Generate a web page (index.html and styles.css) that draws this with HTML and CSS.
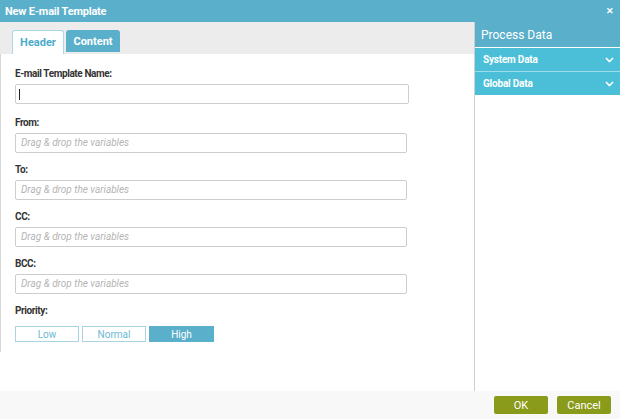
FILE: index.html
```html
<!DOCTYPE html>
<html lang="en">
<head>
  <meta charset="UTF-8">
  <meta name="viewport" content="width=device-width, initial-scale=1.0">
  <title>New E-mail Template</title>
  <link rel="stylesheet" href="styles.css">
</head>
<body>
  <div class="dialog">
    <div class="titlebar">
      <span class="title">New E-mail Template</span>
      <span class="close">&#x2715;</span>
    </div>
    <div class="main">
      <div class="left">
        <div class="tabs">
          <div class="tab active">Header</div>
          <div class="tab">Content</div>
        </div>
        <div class="form">
          <div class="field first">
            <label>E-mail Template Name:</label>
            <div class="input wide"><span class="caret"></span></div>
          </div>
          <div class="field">
            <label>From:</label>
            <div class="input">Drag &amp; drop the variables</div>
          </div>
          <div class="field">
            <label>To:</label>
            <div class="input">Drag &amp; drop the variables</div>
          </div>
          <div class="field">
            <label>CC:</label>
            <div class="input">Drag &amp; drop the variables</div>
          </div>
          <div class="field">
            <label>BCC:</label>
            <div class="input">Drag &amp; drop the variables</div>
          </div>
          <div class="field priority">
            <label>Priority:</label>
            <div class="seg">
              <button>Low</button>
              <button>Normal</button>
              <button class="on">High</button>
            </div>
          </div>
        </div>
      </div>
      <div class="side">
        <div class="side-head">Process Data</div>
        <div class="acc">System Data
          <svg width="9" height="6" viewBox="0 0 9 6"><path d="M1 1l3.5 3.5L8 1" fill="none" stroke="#fff" stroke-width="1.6"/></svg>
        </div>
        <div class="acc">Global Data
          <svg width="9" height="6" viewBox="0 0 9 6"><path d="M1 1l3.5 3.5L8 1" fill="none" stroke="#fff" stroke-width="1.6"/></svg>
        </div>
      </div>
    </div>
    <div class="footer">
      <button class="btn">OK</button>
      <button class="btn">Cancel</button>
    </div>
  </div>
</body>
</html>
```

FILE: styles.css
```css
:root {
  --title: #5aafca;
  --row: #4bbfd7;
  --olive: #8a9a1b;
  --border: #cfcfcf;
}
* { box-sizing: border-box; }
body {
  margin: 0;
  font-family: Roboto, "Liberation Sans", sans-serif;
  background: #fff;
}
.dialog {
  width: 620px;
  height: 419px;
  display: flex;
  flex-direction: column;
}
.titlebar {
  height: 22px;
  background: var(--title);
  color: #fff;
  display: flex;
  align-items: center;
  justify-content: space-between;
  padding: 0 6px 0 5px;
}
.title { font-size: 11px; font-weight: bold; letter-spacing: -0.2px; }
.close { font-size: 9px; font-weight: bold; }
.main {
  flex: 1;
  display: flex;
}
.left {
  width: 474px;
  display: flex;
  flex-direction: column;
}
.tabs {
  height: 32px;
  background: #ececec;
  display: flex;
  align-items: flex-end;
  gap: 2px;
  padding-left: 12px;
}
.tab {
  height: 22px;
  width: 54px;
  margin-bottom: 2px;
  background: var(--title);
  color: #fff;
  font-size: 11px;
  font-weight: bold;
  border-radius: 3px 3px 0 0;
  display: flex;
  align-items: center;
  justify-content: center;
}
.tab.active {
  height: 24px;
  width: 52px;
  margin-bottom: 0;
  background: #fff;
  color: #4aaccc;
  border: 1px solid #a9d8e6;
  border-bottom: none;
}
.form {
  height: 298px;
  border-left: 1px solid #d6d6d6;
  padding: 13px 0 0 14px;
}
.field { margin-bottom: 10px; }
.field.first { margin-bottom: 12px; }
.field label {
  display: block;
  height: 14px;
  margin-bottom: 3px;
  font-size: 10px;
  font-weight: bold;
  letter-spacing: -0.4px;
  color: #333;
  line-height: 14px;
}
.input {
  width: 392px;
  height: 20px;
  border: 1px solid #cdcdcd;
  border-radius: 2px;
  font-size: 10px;
  font-style: italic;
  color: #b5b5b5;
  padding-left: 5px;
  line-height: 18px;
}
.input.wide { width: 394px; display: flex; align-items: center; }
.caret {
  width: 1px;
  height: 11px;
  background: #222;
  margin-left: -2px;
}
.priority label { margin-bottom: 8px; }
.seg { display: flex; gap: 3px; }
.seg button {
  width: 64px;
  height: 16px;
  padding: 0;
  font-family: inherit;
  font-size: 10px;
  color: #6cb8d2;
  background: #fff;
  border: 1px solid #a9d3e2;
}
.seg button.on {
  width: 65px;
  background: var(--title);
  border-color: var(--title);
  color: #fff;
}
.side {
  flex: 1;
  border-left: 1px solid var(--border);
}
.side-head {
  height: 25px;
  background: var(--title);
  color: #fff;
  font-size: 12px;
  padding-left: 6px;
  display: flex;
  align-items: center;
}
.acc {
  height: 23px;
  margin-top: 1px;
  background: var(--row);
  color: #fff;
  font-size: 10px;
  font-weight: bold;
  letter-spacing: -0.2px;
  padding: 0 6px 0 8px;
  display: flex;
  align-items: center;
  justify-content: space-between;
}
.acc + .acc { border-top: 1px solid #9fdbe8; margin-top: 0; height: 24px; }
.footer {
  height: 28px;
  background: #f8f8f8;
  display: flex;
  justify-content: flex-end;
  align-items: center;
  gap: 9px;
  padding-right: 9px;
}
.btn {
  height: 18px;
  width: 54px;
  padding: 0;
  border: none;
  border-radius: 2px;
  background: var(--olive);
  color: #fff;
  font-family: inherit;
  font-size: 11px;
}
```
